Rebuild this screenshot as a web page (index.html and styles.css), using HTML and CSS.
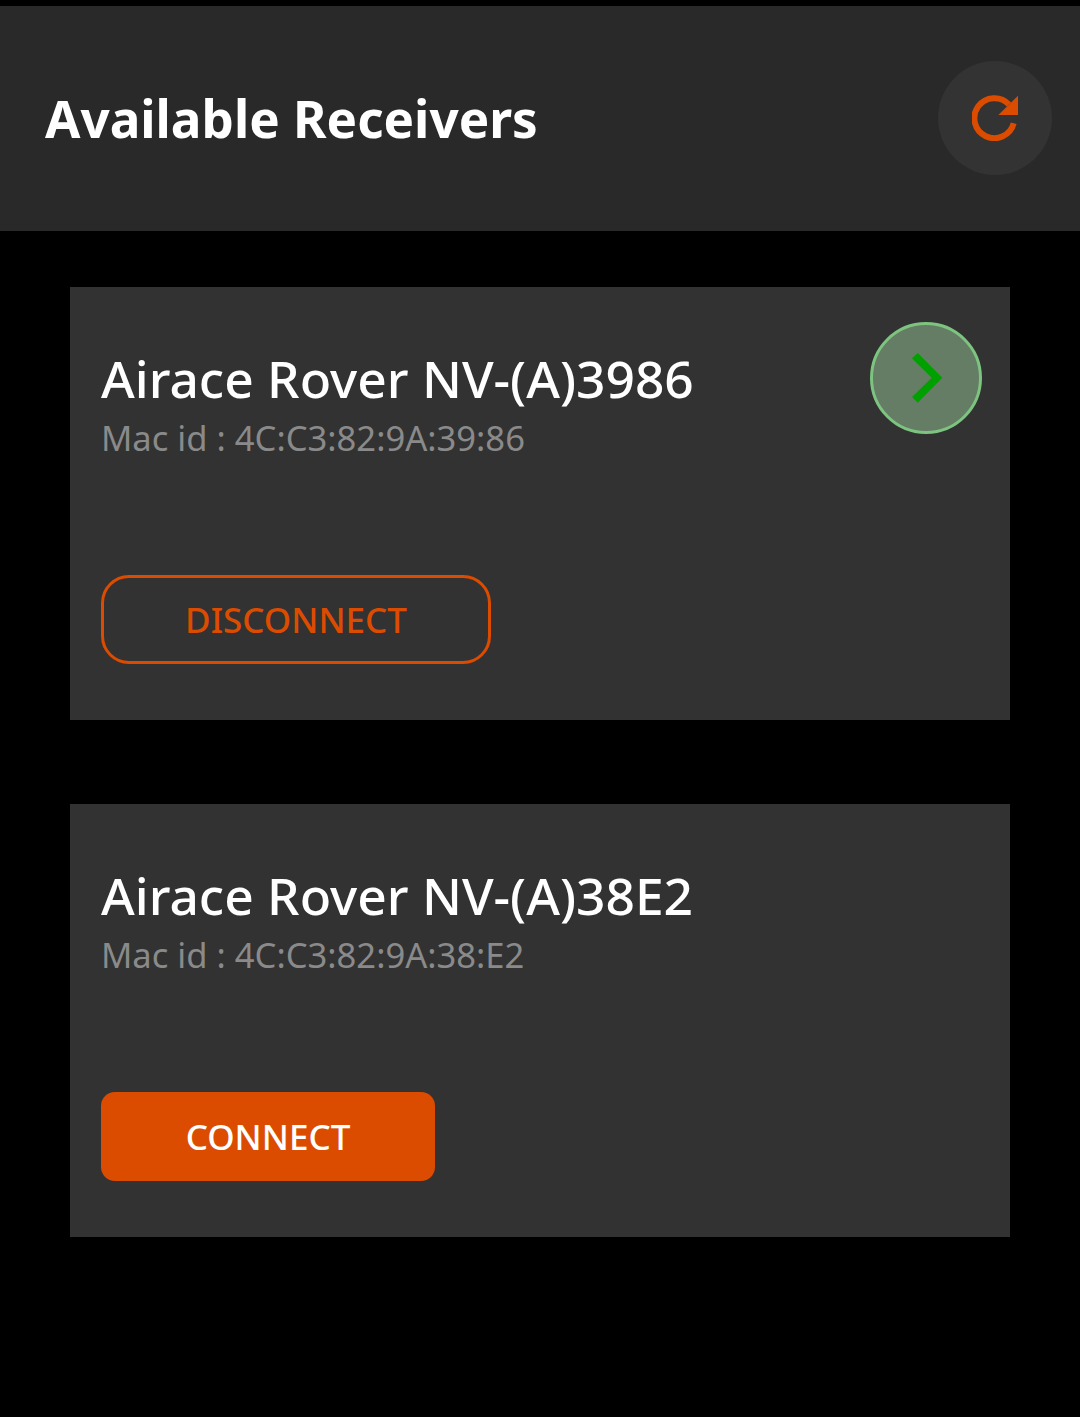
FILE: index.html
```html
<!DOCTYPE html>
<html lang="en">
<head>
<meta charset="utf-8">
<title>Available Receivers</title>
<link rel="stylesheet" href="styles.css">
</head>
<body>
<header class="topbar">
  <h1 class="topbar-title">Available Receivers</h1>
  <button class="refresh" aria-label="Refresh">
    <svg class="refresh-icon" viewBox="0 0 46 46" width="46" height="46">
      <path class="refresh-arc" d="M41.7 28.3A20 20 0 1 1 37 9.5"/>
      <polygon class="refresh-head" points="46,0.7 46,20 26.3,20"/>
    </svg>
  </button>
</header>
<main class="list">
  <section class="card">
    <div class="card-top">
      <div class="card-info">
        <h2 class="card-name">Airace Rover NV-(A)3986</h2>
        <p class="card-mac">Mac id : 4C:C3:82:9A:39:86</p>
      </div>
      <span class="go">
        <svg viewBox="0 0 32 50" width="32" height="50">
          <polygon class="go-chevron" points="0,5.3 5.7,0 30.3,24.7 5.7,49.7 0,44 19.7,24.7"/>
        </svg>
      </span>
    </div>
    <button class="btn btn-outline">DISCONNECT</button>
  </section>
  <section class="card">
    <div class="card-top">
      <div class="card-info">
        <h2 class="card-name">Airace Rover NV-(A)38E2</h2>
        <p class="card-mac">Mac id : 4C:C3:82:9A:38:E2</p>
      </div>
    </div>
    <button class="btn btn-solid">CONNECT</button>
  </section>
</main>
</body>
</html>
```
FILE: styles.css
```css
* { box-sizing: border-box; }
html, body { margin: 0; padding: 0; }
body {
  width: 1080px;
  height: 1417px;
  overflow: hidden;
  background: #000;
  padding-top: 6px;
  font-family: "Noto Sans", "Open Sans", sans-serif;
}
.topbar {
  height: 225px;
  background: #292929;
  display: flex;
  align-items: center;
  justify-content: space-between;
  padding: 0 28px 0 45px;
}
.topbar-title {
  margin: 0;
  font-size: 51.2px;
  font-weight: 700;
  line-height: 65px;
  color: #fff;
}
.refresh {
  width: 114px;
  height: 114px;
  margin-top: -2px;
  border: 0;
  padding: 0;
  border-radius: 50%;
  background: #333;
  display: flex;
  align-items: center;
  justify-content: center;
}
.refresh-icon { display: block; }
.refresh-arc { fill: none; stroke: #dc4c00; stroke-width: 6; }
.refresh-head { fill: #dc4c00; }
.list {
  padding: 56px 70px 0;
  display: flex;
  flex-direction: column;
  gap: 84px;
}
.card {
  height: 433px;
  background: #323232;
  padding: 35px 28px 56px 31px;
  display: flex;
  flex-direction: column;
  justify-content: space-between;
  align-items: flex-start;
}
.card-top {
  width: 100%;
  display: flex;
  justify-content: space-between;
  align-items: flex-start;
}
.card-name {
  margin: 24px 0 1px;
  font-size: 51.5px;
  font-weight: 500;
  line-height: 65px;
  color: #fff;
}
.card-mac {
  margin: 0;
  font-size: 34.6px;
  font-weight: 400;
  line-height: 52px;
  color: #8a8a8a;
}
.go {
  width: 112px;
  height: 112px;
  border: 3px solid #7cc47f;
  border-radius: 50%;
  background: #657d65;
  display: flex;
  align-items: center;
  justify-content: center;
  padding-left: 3px;
}
.go-chevron { fill: #00a000; }
.btn {
  height: 89px;
  font-family: inherit;
  font-size: 35px;
  font-weight: 500;
  line-height: 1;
}
.btn-outline {
  width: 390px;
  padding: 0;
  background: transparent;
  border: 3px solid #dc4c00;
  border-radius: 28px;
  color: #dc4c00;
}
.btn-solid {
  width: 334px;
  padding: 0;
  background: #dc4c00;
  border: 0;
  border-radius: 14px;
  color: #fff;
}
```
